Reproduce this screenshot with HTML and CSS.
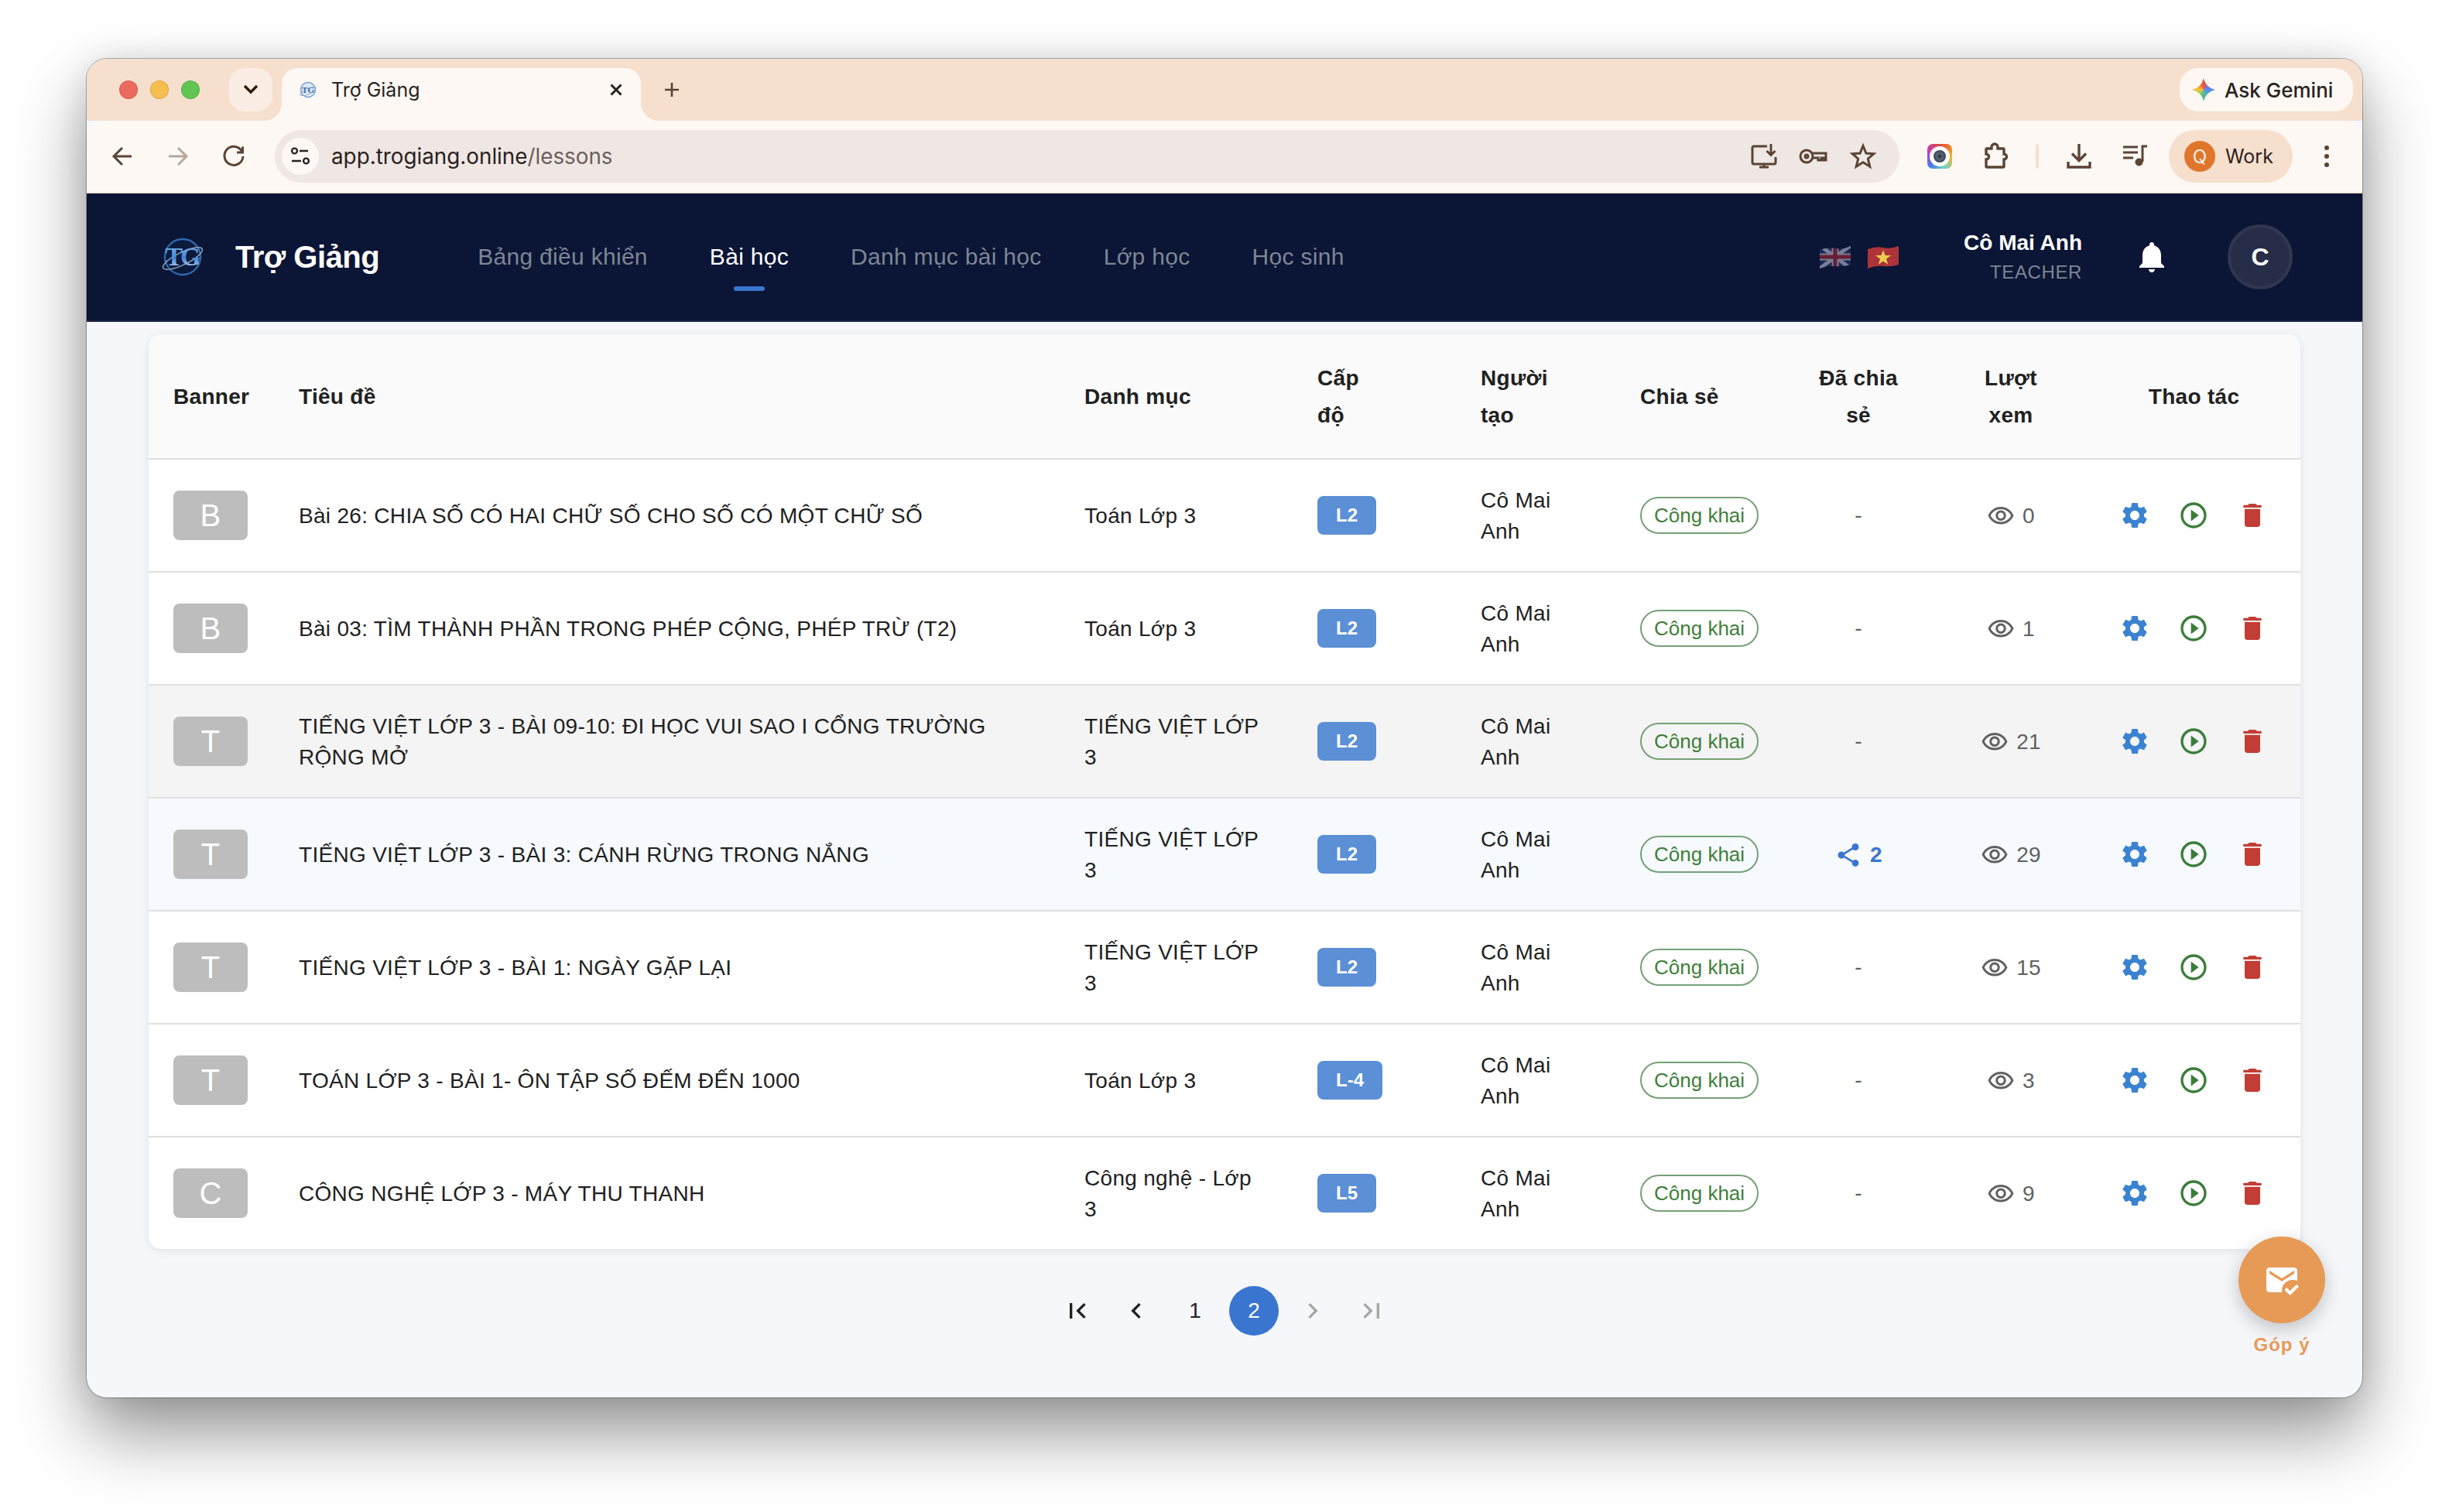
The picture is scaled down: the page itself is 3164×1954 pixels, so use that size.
FILE: index.html
```html
<!DOCTYPE html>
<html>
<head>
  <meta charset="UTF-8">
  <title>Trợ Giảng</title>
  <link rel="stylesheet" href="styles.css">
</head>
<body>

  <svg class="sprite" xmlns="http://www.w3.org/2000/svg">
    <symbol id="i-gear" viewBox="0 0 24 24"><path d="M19.14 12.94c.04-.3.06-.61.06-.94 0-.32-.02-.64-.07-.94l2.03-1.58c.18-.14.23-.41.12-.61l-1.92-3.32c-.12-.22-.37-.29-.59-.22l-2.39.96c-.5-.38-1.03-.7-1.62-.94l-.36-2.54c-.04-.24-.24-.41-.48-.41h-3.84c-.24 0-.43.17-.47.41l-.36 2.54c-.59.24-1.13.57-1.62.94l-2.39-.96c-.22-.08-.47 0-.59.22L2.74 8.87c-.12.21-.08.47.12.61l2.03 1.58c-.05.3-.09.63-.09.94s.02.64.07.94l-2.03 1.58c-.18.14-.23.41-.12.61l1.92 3.32c.12.22.37.29.59.22l2.39-.96c.5.38 1.03.7 1.62.94l.36 2.54c.05.24.24.41.48.41h3.84c.24 0 .44-.17.47-.41l.36-2.54c.59-.24 1.13-.56 1.62-.94l2.39.96c.22.08.47 0 .59-.22l1.92-3.32c.12-.22.07-.47-.12-.61l-2.01-1.58zM12 15.6c-1.98 0-3.6-1.62-3.6-3.6s1.62-3.6 3.6-3.6 3.6 1.62 3.6 3.6-1.62 3.6-3.6 3.6z"/></symbol>
    <symbol id="i-play" viewBox="0 0 24 24"><path d="M10 16.5l6-4.5-6-4.5v9zM12 2C6.48 2 2 6.48 2 12s4.48 10 10 10 10-4.48 10-10S17.52 2 12 2zm0 18c-4.41 0-8-3.59-8-8s3.59-8 8-8 8 3.59 8 8-3.59 8-8 8z"/></symbol>
    <symbol id="i-trash" viewBox="0 0 24 24"><path d="M6 19c0 1.1.9 2 2 2h8c1.1 0 2-.9 2-2V7H6v12zM19 4h-3.5l-1-1h-5l-1 1H5v2h14V4z"/></symbol>
    <symbol id="i-eye" viewBox="0 0 24 24"><path d="M12 6c3.79 0 7.17 2.13 8.82 5.5C19.17 14.87 15.79 17 12 17s-7.17-2.13-8.82-5.5C4.83 8.13 8.21 6 12 6m0-2C7 4 2.73 7.11 1 11.5 2.73 15.89 7 19 12 19s9.27-3.11 11-7.5C21.27 7.11 17 4 12 4zm0 5c1.38 0 2.5 1.12 2.5 2.5S13.38 14 12 14s-2.5-1.12-2.5-2.5S10.62 9 12 9m0-2c-2.48 0-4.5 2.02-4.5 4.5S9.52 16 12 16s4.5-2.02 4.5-4.5S14.48 7 12 7z"/></symbol>
    <symbol id="i-share" viewBox="0 0 24 24"><path d="M18 16.08c-.76 0-1.44.3-1.96.77L8.91 12.7c.05-.23.09-.46.09-.7s-.04-.47-.09-.7l7.05-4.11c.54.5 1.25.81 2.04.81 1.66 0 3-1.34 3-3s-1.34-3-3-3-3 1.34-3 3c0 .24.04.47.09.7L8.04 9.81C7.5 9.31 6.79 9 6 9c-1.66 0-3 1.34-3 3s1.34 3 3 3c.79 0 1.5-.31 2.04-.81l7.12 4.16c-.05.21-.08.43-.08.65 0 1.61 1.31 2.92 2.92 2.92s2.92-1.31 2.92-2.92-1.31-2.92-2.92-2.92z"/></symbol>
  </svg>

  <div class="window">

    <!-- tab strip -->
    <div class="tabstrip">
      <div class="lights">
        <span class="light red"></span>
        <span class="light yellow"></span>
        <span class="light green"></span>
      </div>
      <div class="tab-menu">
        <svg viewBox="0 0 24 16" width="24" height="16"><path d="M4 3l8 8 8-8" fill="none" stroke="#2d1a0b" stroke-width="3.4"/></svg>
      </div>
      <div class="tab">
        <svg class="favicon" viewBox="0 0 24 24" width="24" height="24">
          <circle cx="12" cy="12" r="9.5" fill="#dfe9f4" stroke="#7ba6d6" stroke-width="1.6"/>
          <text x="12" y="16" class="favicon-text">TG</text>
          <ellipse cx="12" cy="14" rx="11" ry="3.6" fill="none" stroke="#8fa9c6" stroke-width=".9" transform="rotate(-24 12 14)"/>
        </svg>
        <span class="tab-title">Trợ Giảng</span>
        <svg class="tab-close" viewBox="0 0 20 20" width="20" height="20"><path d="M3.500 3.500l13 13M16.500 3.500l-13 13" stroke="#2d221c" stroke-width="3" fill="none"/></svg>
      </div>
      <svg class="tab-new" viewBox="0 0 24 24" width="24" height="24"><path d="M12 3v18M3 12h18" stroke="#5a4436" stroke-width="2.6" fill="none"/></svg>
      <div class="gemini">
        <span class="spark"></span>
        <span>Ask Gemini</span>
      </div>
    </div>

    <!-- toolbar -->
    <div class="toolbar">
      <svg class="tool" viewBox="0 0 40 40"><path d="M32 20H9M20 9L9 20l11 11"/></svg>
      <svg class="tool off" viewBox="0 0 40 40"><path d="M8 20h23M20 9l11 11-11 11"/></svg>
      <svg class="tool" viewBox="0 0 40 40"><path d="M30.5 13.5A12 12 0 1 0 32 20M31.5 7.500v7.500H24"/></svg>

      <div class="urlbar">
        <div class="url-tune">
          <svg viewBox="0 0 32 32" width="32" height="32"><g fill="none" stroke="#2a2320" stroke-width="2.400"><circle cx="8.500" cy="9" r="3.400"/><path d="M15 9h11M5 22h12"/><circle cx="23.500" cy="22" r="3.400"/></g></svg>
        </div>
        <div class="url-text">app.trogiang.online<span class="url-path">/lessons</span></div>
        <svg class="tool" viewBox="0 0 40 40"><path d="M24 7H7a2 2 0 0 0-2 2v19a2 2 0 0 0 2 2h26a2 2 0 0 0 2-2v-7M14 34h12M20 30v4M29 4v14M23.500 13l5.500 5.500 5.500-5.500"/></svg>
        <svg class="tool" viewBox="0 0 40 40"><circle cx="11" cy="20" r="8"/><circle cx="11" cy="20" r="2"/><path d="M19 16h17v9h-3v-3h-3v3h-4v-3h-7"/></svg>
        <svg class="tool" viewBox="0 0 40 40"><path d="M20 6.500l3.900 9.600 9.900.6-7.500 6.500 2.500 10-8.800-5.500-8.800 5.500 2.500-10-7.500-6.500 9.900-.6z"/></svg>
      </div>

      <div class="ext-color"><span class="ext-lens"></span></div>
      <svg class="tool tool-bold" viewBox="0 0 40 40"><path d="M9 10h6V8a4 4 0 0 1 8 0v2h7a1 1 0 0 1 1 1v6a3.500 3.500 0 0 1 0 7v9a1 1 0 0 1-1 1H9a1 1 0 0 1-1-1v-9a3.500 3.500 0 0 0 0-7v-6a1 1 0 0 1 1-1z"/></svg>
      <span class="tool-sep"></span>
      <svg class="tool tool-bold" viewBox="0 0 40 40"><path d="M20 4v21M11 16.500l9 9 9-9M6 27v7h28v-7"/></svg>
      <svg class="tool" viewBox="0 0 40 40"><path d="M5 8h19M5 15h19M5 22h13M30 27V7h6"/><circle class="solid" cx="25.500" cy="27.500" r="5"/></svg>
      <div class="profile">
        <span class="profile-badge">Q</span>
        <span>Work</span>
      </div>
      <svg class="tool tool-dots" viewBox="0 0 40 40"><circle class="solid" cx="20" cy="9" r="3"/><circle class="solid" cx="20" cy="20" r="3"/><circle class="solid" cx="20" cy="31" r="3"/></svg>
    </div>

    <!-- app header -->
    <div class="navbar">
      <svg class="logo" viewBox="0 0 56 52" width="56" height="52">
        <defs>
          <linearGradient id="logoBlue" x1="0" y1="0" x2="0" y2="1">
            <stop offset="0" stop-color="#8cc0f2"/>
            <stop offset=".55" stop-color="#3f86d8"/>
            <stop offset="1" stop-color="#dde6ef"/>
          </linearGradient>
        </defs>
        <circle cx="28" cy="26" r="23" fill="#0c1a3c" stroke="#2f68ad" stroke-width="2.400"/>
        <ellipse cx="28" cy="28" rx="28" ry="8" fill="none" stroke="#8ba2bb" stroke-width="1.500" transform="rotate(-26 28 28)"/>
        <text x="27" y="37" class="logo-text" fill="url(#logoBlue)">TG</text>
      </svg>
      <div class="brand">Trợ Giảng</div>
      <div class="nav-links">
        <a class="nav-link">Bảng điều khiển</a>
        <a class="nav-link active">Bài học</a>
        <a class="nav-link">Danh mục bài học</a>
        <a class="nav-link">Lớp học</a>
        <a class="nav-link">Học sinh</a>
      </div>
      <div class="nav-right">
        <div class="flags">
          <svg class="flag flag-uk" viewBox="0 0 40 30" width="40" height="30">
            <defs><clipPath id="waveUk"><path d="M0 6Q10 2 20 4T40 1V25Q30 28 20 27T0 30Z"/></clipPath></defs>
            <g clip-path="url(#waveUk)">
              <rect width="40" height="30" fill="#2b3a78"/>
              <path d="M0 0L40 30M40 0L0 30" stroke="#e6e6ee" stroke-width="5"/>
              <path d="M20 0V30M0 15H40" stroke="#e6e6ee" stroke-width="9"/>
              <path d="M20 0V30M0 15H40" stroke="#c0283a" stroke-width="5"/>
            </g>
          </svg>
          <svg class="flag flag-vn" viewBox="0 0 40 30" width="40" height="30">
            <path d="M0 5Q10 1 20 3T40 1V25Q30 28 20 27T0 30Z" fill="#b6363c"/>
            <path d="M20 6l2.500 7h7.500l-6 4.500 2.200 7.200L20 20.400l-6.200 4.300 2.200-7.200-6-4.500h7.500z" fill="#f6da4e"/>
          </svg>
        </div>
        <div class="user">
          <div class="user-name">Cô Mai Anh</div>
          <div class="user-role">TEACHER</div>
        </div>
        <svg class="bell" viewBox="0 0 24 24" width="48" height="48"><path d="M12 22c1.100 0 2-.9 2-2h-4c0 1.100.89 2 2 2zm6-6v-5c0-3.070-1.640-5.640-4.500-6.320V4c0-.83-.67-1.500-1.500-1.500s-1.500.67-1.500 1.500v.68C7.630 5.360 6 7.920 6 11v5l-2 2v1h16v-1l-2-2z"/></svg>
        <div class="avatar">C</div>
      </div>
    </div>

    <!-- lessons -->
    <div class="content">
      <div class="card">
        <table class="lessons">
          <colgroup>
            <col class="c-banner"><col class="c-title"><col class="c-cat"><col class="c-level"><col class="c-owner"><col class="c-public"><col class="c-shared"><col class="c-views"><col class="c-actions">
          </colgroup>
          <thead>
            <tr>
              <th>Banner</th>
              <th>Tiêu đề</th>
              <th>Danh mục</th>
              <th>Cấp<br>độ</th>
              <th>Người<br>tạo</th>
              <th>Chia sẻ</th>
              <th class="center">Đã chia<br>sẻ</th>
              <th class="center">Lượt<br>xem</th>
              <th class="center">Thao tác</th>
            </tr>
          </thead>
          <tbody>
            <tr>
              <td><div class="thumb">B</div></td>
              <td class="txt">Bài 26: CHIA SỐ CÓ HAI CHỮ SỐ CHO SỐ CÓ MỘT CHỮ SỐ</td>
              <td class="txt">Toán Lớp 3</td>
              <td><span class="level">L2</span></td>
              <td class="txt">Cô Mai<br>Anh</td>
              <td><span class="pill">Công khai</span></td>
              <td class="center muted">-</td>
              <td class="center"><span class="views"><svg><use href="#i-eye"/></svg>0</span></td>
              <td><div class="actions"><svg class="a-gear"><use href="#i-gear"/></svg><svg class="a-play"><use href="#i-play"/></svg><svg class="a-trash"><use href="#i-trash"/></svg></div></td>
            </tr>
            <tr>
              <td><div class="thumb">B</div></td>
              <td class="txt">Bài 03: TÌM THÀNH PHẦN TRONG PHÉP CỘNG, PHÉP TRỪ (T2)</td>
              <td class="txt">Toán Lớp 3</td>
              <td><span class="level">L2</span></td>
              <td class="txt">Cô Mai<br>Anh</td>
              <td><span class="pill">Công khai</span></td>
              <td class="center muted">-</td>
              <td class="center"><span class="views"><svg><use href="#i-eye"/></svg>1</span></td>
              <td><div class="actions"><svg class="a-gear"><use href="#i-gear"/></svg><svg class="a-play"><use href="#i-play"/></svg><svg class="a-trash"><use href="#i-trash"/></svg></div></td>
            </tr>
            <tr class="row-grey">
              <td><div class="thumb">T</div></td>
              <td class="txt">TIẾNG VIỆT LỚP 3 - BÀI 09-10: ĐI HỌC VUI SAO I CỔNG TRƯỜNG RỘNG MỞ</td>
              <td class="txt">TIẾNG VIỆT LỚP 3</td>
              <td><span class="level">L2</span></td>
              <td class="txt">Cô Mai<br>Anh</td>
              <td><span class="pill">Công khai</span></td>
              <td class="center muted">-</td>
              <td class="center"><span class="views"><svg><use href="#i-eye"/></svg>21</span></td>
              <td><div class="actions"><svg class="a-gear"><use href="#i-gear"/></svg><svg class="a-play"><use href="#i-play"/></svg><svg class="a-trash"><use href="#i-trash"/></svg></div></td>
            </tr>
            <tr class="row-shared">
              <td><div class="thumb">T</div></td>
              <td class="txt">TIẾNG VIỆT LỚP 3 - BÀI 3: CÁNH RỪNG TRONG NẮNG</td>
              <td class="txt">TIẾNG VIỆT LỚP 3</td>
              <td><span class="level">L2</span></td>
              <td class="txt">Cô Mai<br>Anh</td>
              <td><span class="pill">Công khai</span></td>
              <td class="center"><span class="shared"><svg><use href="#i-share"/></svg>2</span></td>
              <td class="center"><span class="views"><svg><use href="#i-eye"/></svg>29</span></td>
              <td><div class="actions"><svg class="a-gear"><use href="#i-gear"/></svg><svg class="a-play"><use href="#i-play"/></svg><svg class="a-trash"><use href="#i-trash"/></svg></div></td>
            </tr>
            <tr>
              <td><div class="thumb">T</div></td>
              <td class="txt">TIẾNG VIỆT LỚP 3 - BÀI 1: NGÀY GẶP LẠI</td>
              <td class="txt">TIẾNG VIỆT LỚP 3</td>
              <td><span class="level">L2</span></td>
              <td class="txt">Cô Mai<br>Anh</td>
              <td><span class="pill">Công khai</span></td>
              <td class="center muted">-</td>
              <td class="center"><span class="views"><svg><use href="#i-eye"/></svg>15</span></td>
              <td><div class="actions"><svg class="a-gear"><use href="#i-gear"/></svg><svg class="a-play"><use href="#i-play"/></svg><svg class="a-trash"><use href="#i-trash"/></svg></div></td>
            </tr>
            <tr>
              <td><div class="thumb">T</div></td>
              <td class="txt">TOÁN LỚP 3 - BÀI 1- ÔN TẬP SỐ ĐẾM ĐẾN 1000</td>
              <td class="txt">Toán Lớp 3</td>
              <td><span class="level">L-4</span></td>
              <td class="txt">Cô Mai<br>Anh</td>
              <td><span class="pill">Công khai</span></td>
              <td class="center muted">-</td>
              <td class="center"><span class="views"><svg><use href="#i-eye"/></svg>3</span></td>
              <td><div class="actions"><svg class="a-gear"><use href="#i-gear"/></svg><svg class="a-play"><use href="#i-play"/></svg><svg class="a-trash"><use href="#i-trash"/></svg></div></td>
            </tr>
            <tr>
              <td><div class="thumb">C</div></td>
              <td class="txt">CÔNG NGHỆ LỚP 3 - MÁY THU THANH</td>
              <td class="txt">Công nghệ - Lớp<br>3</td>
              <td><span class="level">L5</span></td>
              <td class="txt">Cô Mai<br>Anh</td>
              <td><span class="pill">Công khai</span></td>
              <td class="center muted">-</td>
              <td class="center"><span class="views"><svg><use href="#i-eye"/></svg>9</span></td>
              <td><div class="actions"><svg class="a-gear"><use href="#i-gear"/></svg><svg class="a-play"><use href="#i-play"/></svg><svg class="a-trash"><use href="#i-trash"/></svg></div></td>
            </tr>
          </tbody>
        </table>
      </div>

      <div class="pager">
        <span class="page"><svg viewBox="0 0 24 24"><path d="M18.41 16.59L13.82 12l4.59-4.59L17 6l-6 6 6 6zM6 6h2v12H6z"/></svg></span>
        <span class="page"><svg viewBox="0 0 24 24"><path d="M15.41 7.41L14 6l-6 6 6 6 1.41-1.41L10.83 12z"/></svg></span>
        <span class="page">1</span>
        <span class="page current">2</span>
        <span class="page disabled"><svg viewBox="0 0 24 24"><path d="M10 6L8.59 7.41 13.17 12l-4.58 4.59L10 18l6-6z"/></svg></span>
        <span class="page disabled"><svg viewBox="0 0 24 24"><path d="M5.59 7.41L10.18 12l-4.59 4.59L7 18l6-6-6-6zM16 6h2v12h-2z"/></svg></span>
      </div>
    </div>

    <!-- feedback button -->
    <div class="feedback">
      <div class="feedback-btn">
        <svg viewBox="0 0 24 24" width="48" height="48"><path d="M12 19c0-3.870 3.130-7 7-7 1.080 0 2.090.25 3 .68V6c0-1.100-.9-2-2-2H4c-1.100 0-2 .9-2 2v12c0 1.100.9 2 2 2h8.080c-.05-.33-.08-.66-.08-1zM4 6l8 5 8-5v2l-8 5-8-5V6zm13.340 16l-3.540-3.540 1.410-1.410 2.120 2.120 4.240-4.240L23 16.340 17.340 22z"/></svg>
      </div>
      <div class="feedback-label">Góp ý</div>
    </div>

  </div>

</body>
</html>
```

FILE: styles.css
```css
html, body {
  margin: 0;
  background: #fff;
}
body {
  width: 3164px;
  height: 1954px;
  padding: 76px 112px 0;
  box-sizing: border-box;
  overflow: hidden;
  font-family: "Liberation Sans", Arial, sans-serif;
}
.sprite {
  display: none;
}

.window {
  position: relative;
  width: 2940px;
  height: 1730px;
  border-radius: 26px;
  background: #f5f7fb;
  box-shadow: 0 0 0 1px rgba(0, 0, 0, .28), 0 46px 90px rgba(0, 0, 0, .42), 0 0 40px rgba(0, 0, 0, .1);
  display: flex;
  flex-direction: column;
}

/* browser chrome */
.tabstrip {
  height: 80px;
  box-sizing: border-box;
  flex: none;
  padding: 12px 12px 0 42px;
  display: flex;
  align-items: flex-start;
  background: #f7dfcd;
  border-radius: 26px 26px 0 0;
  font-family: Inter, "Noto Sans", sans-serif;
}
.lights {
  height: 56px;
  display: flex;
  align-items: center;
  gap: 16px;
}
.light {
  width: 24px;
  height: 24px;
  border-radius: 50%;
  box-sizing: border-box;
  border: 1px solid rgba(0, 0, 0, .12);
}
.red { background: #ec6a5e; }
.yellow { background: #f5bf4f; }
.green { background: #61c554; }
.tab-menu {
  width: 56px;
  height: 56px;
  margin-left: 38px;
  border-radius: 20px;
  background: #fbede4;
  display: flex;
  align-items: center;
  justify-content: center;
}
.tab {
  position: relative;
  width: 464px;
  height: 68px;
  margin-left: 12px;
  padding: 0 22px 12px;
  box-sizing: border-box;
  display: flex;
  align-items: center;
  background: #fdf8f4;
  border-radius: 20px 20px 0 0;
}
.tab::before,
.tab::after {
  content: "";
  position: absolute;
  bottom: 0;
  width: 24px;
  height: 24px;
}
.tab::before {
  left: -24px;
  background: radial-gradient(circle at 0 0, transparent 24px, #fdf8f4 24.5px);
}
.tab::after {
  right: -24px;
  background: radial-gradient(circle at 100% 0, transparent 24px, #fdf8f4 24.5px);
}
.favicon-text {
  font: bold 11px "Liberation Serif", serif;
  fill: #2a5ea8;
  text-anchor: middle;
}
.tab-title {
  margin-left: 18px;
  font-size: 25px;
  color: #2a2320;
  flex: 1;
}
.tab-new {
  margin: 16px 0 0 28px;
}
.gemini {
  margin-left: auto;
  width: 224px;
  height: 56px;
  box-sizing: border-box;
  padding-left: 16px;
  gap: 12px;
  display: flex;
  align-items: center;
  border-radius: 24px;
  background: #fdf8f4;
  font-size: 26px;
  font-weight: 500;
  color: #2a2320;
}
.spark {
  width: 30px;
  height: 30px;
  flex: none;
  background: conic-gradient(#e8503f 0deg, #7a7ae0 60deg, #4f8ff0 100deg, #4fb0c0 150deg, #58c078 190deg, #c8c850 240deg, #f5c030 280deg, #e8503f 360deg);
  clip-path: path("M15 0C17 8 22 13 30 15C22 17 17 22 15 30C13 22 8 17 0 15C8 13 13 8 15 0Z");
}

.toolbar {
  height: 94px;
  box-sizing: border-box;
  flex: none;
  padding: 12px 26px 14px;
  display: flex;
  align-items: center;
  gap: 32px;
  background: #fdf8f4;
  border-radius: 20px 20px 0 0;
  box-shadow: inset 0 -2px 0 #f7e6da;
  font-family: Inter, "Noto Sans", sans-serif;
}
.tool {
  width: 40px;
  height: 40px;
  flex: none;
  fill: none;
  stroke: #5a4436;
  stroke-width: 3;
}
.tool-bold {
  stroke-width: 3.4;
}
.tool.off {
  stroke: #b3a9a2;
}
.tool .solid {
  fill: #5a4436;
  stroke: none;
}
.urlbar {
  flex: 1;
  height: 68px;
  padding: 0 27px 0 9px;
  margin-left: 1px;
  display: flex;
  align-items: center;
  gap: 24px;
  border-radius: 34px;
  background: #efe7e4;
}
.url-tune {
  width: 48px;
  height: 48px;
  flex: none;
  border-radius: 50%;
  margin-right: -8px;
  background: #fdf8f4;
  display: flex;
  align-items: center;
  justify-content: center;
}
.url-text {
  flex: 1;
  font-size: 27.8px;
  color: #2a2320;
}
.url-path {
  color: #6b5f59;
}
.ext-color {
  width: 32px;
  height: 32px;
  flex: none;
  margin: 0 4px;
  border-radius: 7px;
  display: flex;
  align-items: center;
  justify-content: center;
  background: conic-gradient(#e0483a, #f2b62f 25%, #6ad6c4 45%, #4a7de8 62%, #c43ac8 80%, #e0483a);
}
.ext-lens {
  width: 16px;
  height: 16px;
  border-radius: 50%;
  background: radial-gradient(circle, #2f3f4c 22%, #5d6c7a 26%, #3a4652 70%);
  border: 5px solid #fff;
}
.tool-sep {
  width: 4px;
  height: 32px;
  flex: none;
  border-radius: 2px;
  background: #f7dfcd;
}
.profile {
  width: 160px;
  height: 68px;
  flex: none;
  margin: 0 -8px;
  padding-left: 20px;
  box-sizing: border-box;
  display: flex;
  align-items: center;
  gap: 13px;
  border-radius: 34px;
  background: #f7dfcd;
  font-size: 25px;
  color: #2a2320;
}
.profile-badge {
  width: 40px;
  height: 40px;
  border-radius: 50%;
  background: #e0762b;
  color: #fdeee2;
  display: flex;
  align-items: center;
  justify-content: center;
  font-size: 24px;
}

/* app header */
.navbar {
  height: 166px;
  box-sizing: border-box;
  flex: none;
  padding: 0 90px 2px 96px;
  display: flex;
  align-items: center;
  background: #0b1535;
  box-shadow: inset 0 -2px 0 #1c2544;
}
.logo {
  flex: none;
}
.logo-text {
  font: bold 34px "Liberation Serif", serif;
  letter-spacing: -3px;
  text-anchor: middle;
}
.brand {
  margin-left: 40px;
  font-size: 40px;
  font-weight: bold;
  letter-spacing: -.5px;
  color: #fff;
}
.nav-links {
  margin-left: 127px;
  display: flex;
  gap: 80px;
}
.nav-link {
  position: relative;
  font-size: 30px;
  letter-spacing: .3px;
  color: #7d8694;
}
.nav-link.active {
  color: #fff;
}
.nav-link.active::after {
  content: "";
  position: absolute;
  left: 50%;
  bottom: -27px;
  width: 40px;
  height: 6px;
  margin-left: -20px;
  border-radius: 3px;
  background: #3a75cf;
}
.nav-right {
  margin-left: auto;
  display: flex;
  align-items: center;
}
.flags {
  display: flex;
  gap: 22px;
}
.flag-uk {
  opacity: .5;
}
.flag-vn {
  opacity: .95;
}
.user {
  margin-left: 84px;
  text-align: right;
}
.user-name {
  font-size: 28px;
  font-weight: bold;
  line-height: 40px;
  color: #fff;
}
.user-role {
  font-size: 24px;
  letter-spacing: .6px;
  line-height: 36px;
  color: #7d8694;
}
.bell {
  margin-left: 66px;
  fill: #fff;
}
.avatar {
  width: 84px;
  height: 84px;
  margin-left: 74px;
  box-sizing: border-box;
  border: 4px solid #2f3751;
  border-radius: 50%;
  background: #262d49;
  color: #fff;
  font-size: 32px;
  font-weight: bold;
  display: flex;
  align-items: center;
  justify-content: center;
}

/* lessons table */
.content {
  flex: 1;
  padding: 16px 80px 0;
}
.card {
  border-radius: 16px;
  overflow: hidden;
  background: #fff;
  box-shadow: 0 2px 12px rgba(0, 0, 0, .09);
}
.lessons {
  width: 2780px;
  table-layout: fixed;
  border-collapse: separate;
  border-spacing: 0;
  font-size: 28px;
  line-height: 40px;
  letter-spacing: .3px;
  color: #212121;
}
.c-banner { width: 162px; }
.c-title { width: 1015px; }
.c-cat { width: 301px; }
.c-level { width: 211px; }
.c-owner { width: 206px; }
.c-public { width: 216px; }
.c-shared { width: 196px; }
.c-views { width: 198px; }
.c-actions { width: 275px; }
.lessons th,
.lessons td {
  padding: 0 32px;
  border-bottom: 2px solid #e0e0e0;
  text-align: left;
  vertical-align: middle;
}
.lessons th {
  height: 158px;
  padding-top: 2px;
  line-height: 48px;
  font-weight: bold;
  background: #fafafa;
}
.lessons td {
  height: 144px;
}
.lessons td.txt {
  height: 142px;
  padding-top: 2px;
}
.lessons tbody tr:last-child td {
  border-bottom: 0;
}
.lessons .center {
  text-align: center;
}
.row-grey td {
  background: #f4f4f4;
}
.row-shared td {
  background: #f6fafe;
}
.muted {
  color: #616161;
}
.thumb {
  width: 96px;
  height: 64px;
  border-radius: 8px;
  background: #bdbdbd;
  color: #fff;
  font-size: 40px;
  display: flex;
  align-items: center;
  justify-content: center;
}
.level {
  display: inline-flex;
  align-items: center;
  height: 50px;
  padding: 0 24px;
  border-radius: 8px;
  background: #5b8fd6;
  color: #fff;
  font-size: 24px;
  font-weight: bold;
  letter-spacing: 0;
  vertical-align: middle;
}
.pill {
  display: inline-flex;
  align-items: center;
  height: 48px;
  box-sizing: border-box;
  padding: 0 16px;
  border: 2px solid #76a076;
  border-radius: 24px;
  color: #3f7f3a;
  font-size: 26px;
  letter-spacing: 0;
  white-space: nowrap;
  vertical-align: middle;
}
.views,
.shared {
  display: inline-flex;
  align-items: center;
  vertical-align: middle;
  gap: 10px;
  color: #616161;
}
.views svg {
  width: 36px;
  height: 36px;
  fill: #616161;
}
.shared {
  color: #3a75cf;
  font-weight: bold;
}
.shared svg {
  width: 36px;
  height: 36px;
  fill: #3a75cf;
}
.actions {
  display: flex;
  justify-content: center;
  gap: 36px;
  margin: 0 -32px 0 -33px;
}
.actions svg {
  width: 40px;
  height: 40px;
}
.a-gear { fill: #3b82d0; }
.a-play { fill: #3b7d3a; }
.a-trash { fill: #c23d35; }

/* pager */
.pager {
  margin-top: 48px;
  display: flex;
  justify-content: center;
  gap: 12px;
}
.page {
  width: 64px;
  height: 64px;
  border-radius: 50%;
  display: flex;
  align-items: center;
  justify-content: center;
  font-size: 28px;
  color: #212121;
}
.page svg {
  width: 40px;
  height: 40px;
  fill: #212121;
}
.page.current {
  background: #3a75cf;
  color: #fff;
}
.page.disabled svg {
  fill: #a6a6a6;
}

/* feedback */
.feedback {
  position: absolute;
  right: 48px;
  top: 1522px;
  width: 112px;
  display: flex;
  flex-direction: column;
  align-items: center;
}
.feedback-btn {
  width: 112px;
  height: 112px;
  border-radius: 50%;
  background: #e79a55;
  box-shadow: 0 8px 24px rgba(0, 0, 0, .22);
  display: flex;
  align-items: center;
  justify-content: center;
}
.feedback-btn svg {
  fill: #fff;
}
.feedback-label {
  margin-top: 14px;
  font-size: 24px;
  font-weight: bold;
  letter-spacing: 1px;
  white-space: nowrap;
  color: #e79a55;
}
```
